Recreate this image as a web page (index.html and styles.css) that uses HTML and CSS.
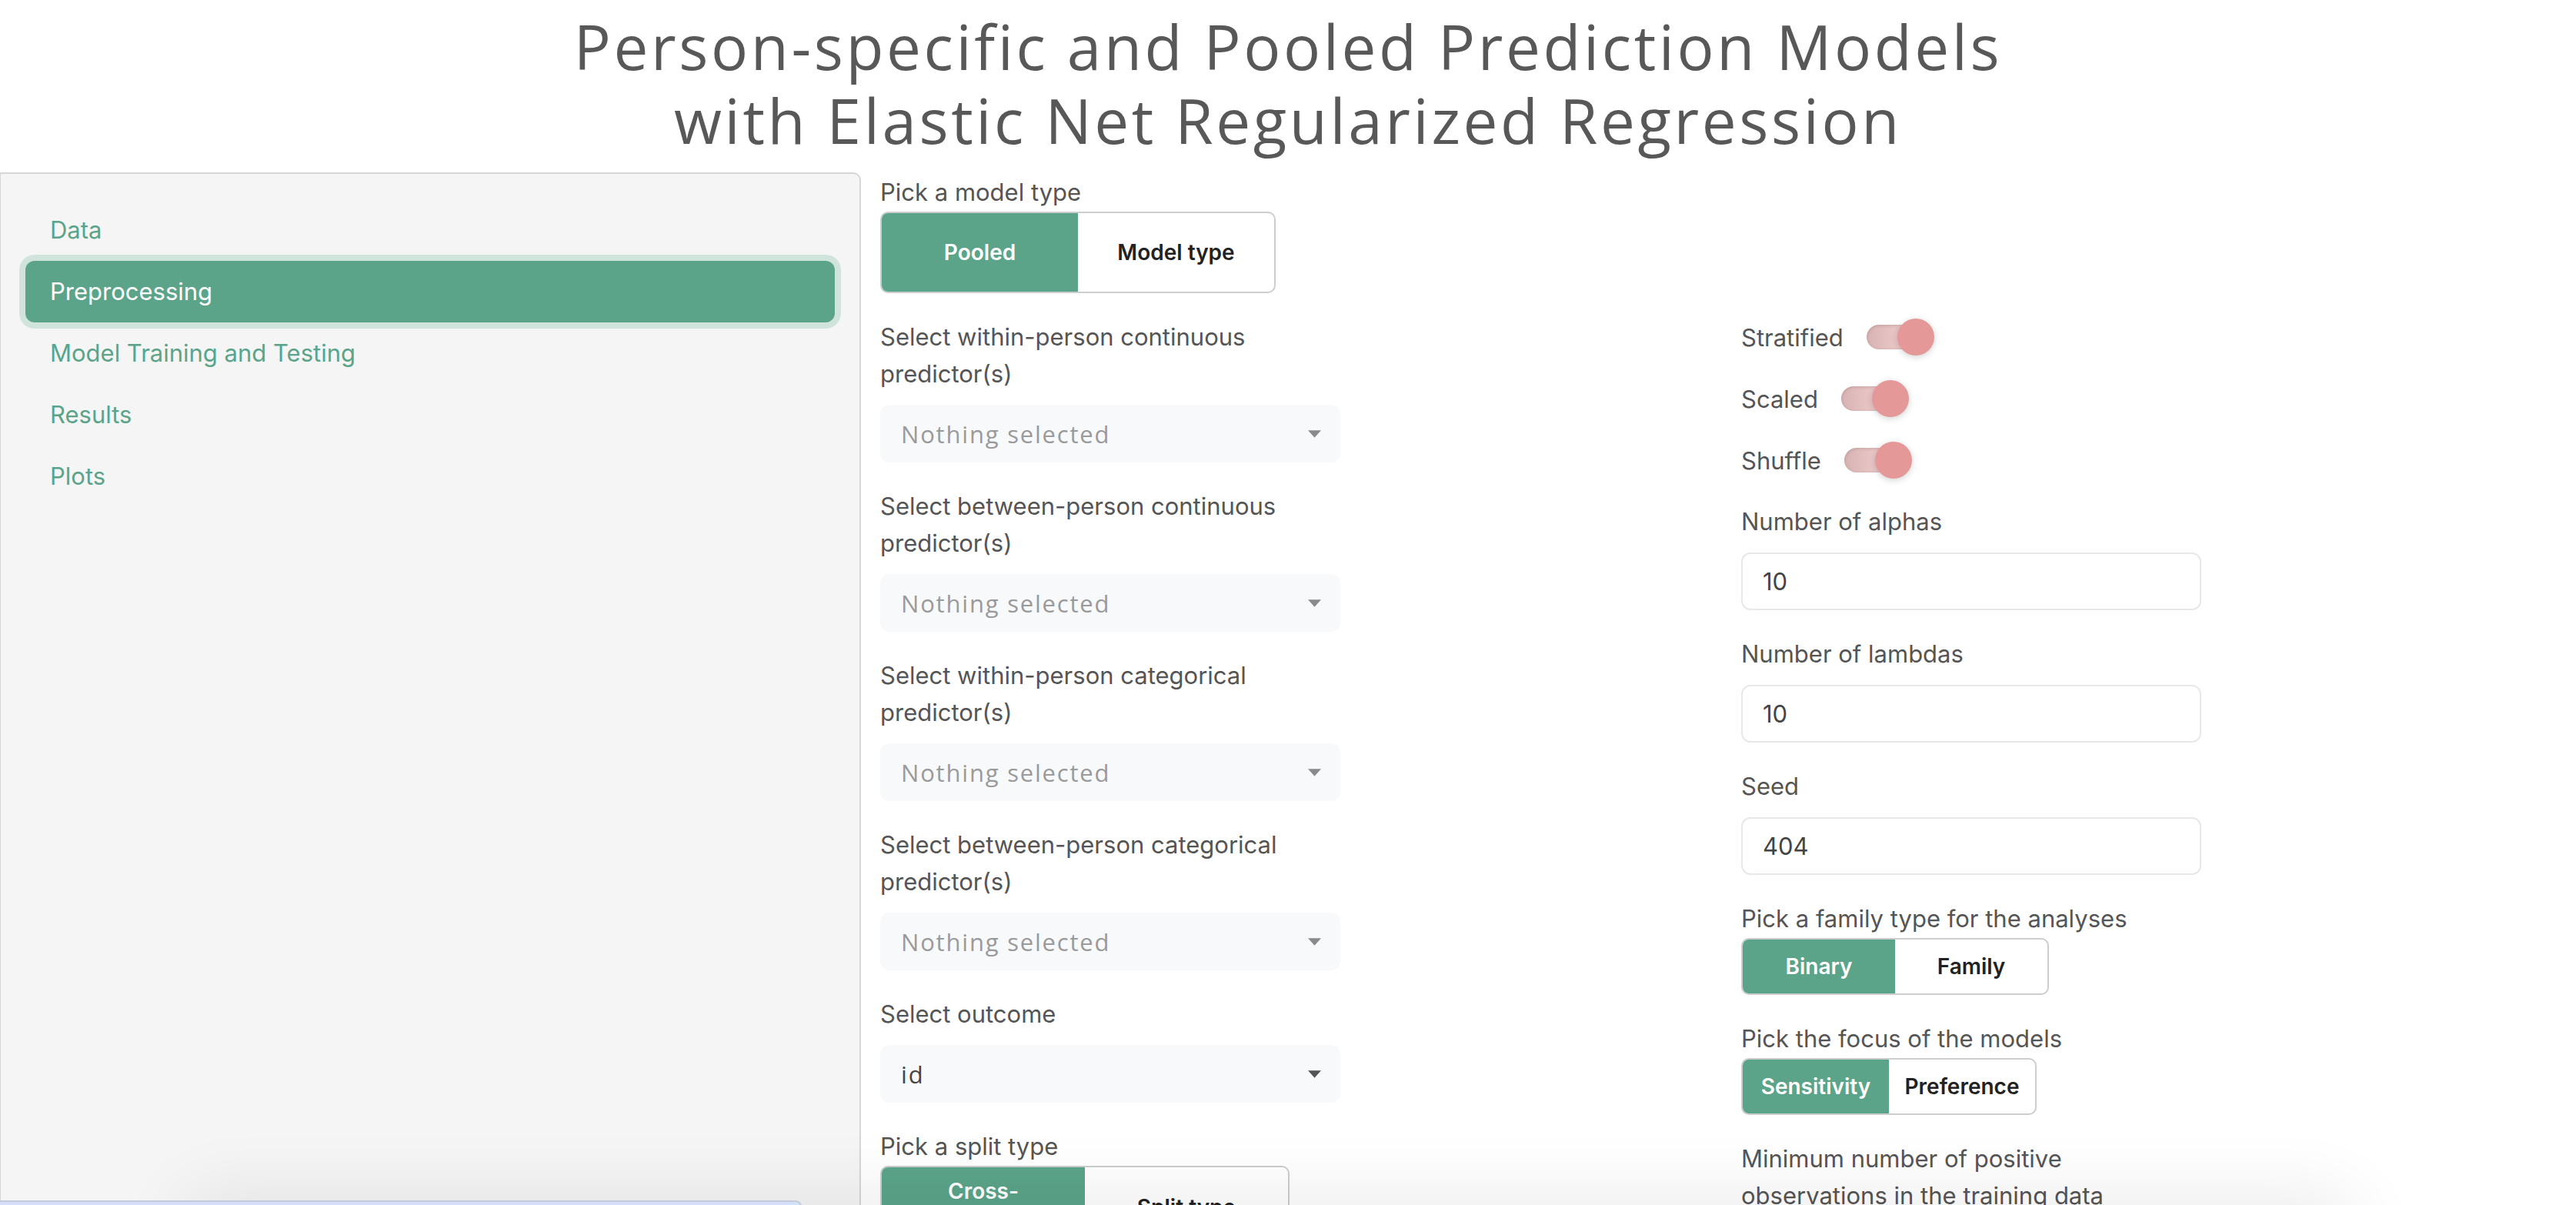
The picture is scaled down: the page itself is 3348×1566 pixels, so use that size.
FILE: index.html
```html
<!DOCTYPE html>
<html lang="en">
<head>
<meta charset="utf-8">
<title>Person-specific and Pooled Prediction Models</title>
<link rel="stylesheet" href="styles.css">
</head>
<body>
<h1 class="title"><span class="title-line">Person-specific and Pooled Prediction Models</span><span class="title-line">with Elastic Net Regularized Regression</span></h1>
<div class="layout">
  <aside class="well">
    <ul class="nav-pills">
      <li><a class="nav-link">Data</a></li>
      <li><a class="nav-link active">Preprocessing</a></li>
      <li><a class="nav-link">Model Training and Testing</a></li>
      <li><a class="nav-link">Results</a></li>
      <li><a class="nav-link">Plots</a></li>
    </ul>
  </aside>
  <main class="main">
    <div class="col col-left">
      <div class="field">
        <label class="lbl lbl-tight">Pick a model type</label>
        <div class="btn-group grp-model">
          <span class="btn on">Pooled</span>
          <span class="btn">Model type</span>
        </div>
      </div>
      <div class="field">
        <label class="lbl">Select within-person continuous predictor(s)</label>
        <div class="select placeholder"><span>Nothing selected</span><svg class="caret" viewBox="0 0 18 10"><path d="M0 0h18L9 10z"/></svg></div>
      </div>
      <div class="field">
        <label class="lbl">Select between-person continuous predictor(s)</label>
        <div class="select placeholder"><span>Nothing selected</span><svg class="caret" viewBox="0 0 18 10"><path d="M0 0h18L9 10z"/></svg></div>
      </div>
      <div class="field">
        <label class="lbl">Select within-person categorical predictor(s)</label>
        <div class="select placeholder"><span>Nothing selected</span><svg class="caret" viewBox="0 0 18 10"><path d="M0 0h18L9 10z"/></svg></div>
      </div>
      <div class="field">
        <label class="lbl">Select between-person categorical predictor(s)</label>
        <div class="select placeholder"><span>Nothing selected</span><svg class="caret" viewBox="0 0 18 10"><path d="M0 0h18L9 10z"/></svg></div>
      </div>
      <div class="field">
        <label class="lbl">Select outcome</label>
        <div class="select"><span>id</span><svg class="caret" viewBox="0 0 18 10"><path d="M0 0h18L9 10z"/></svg></div>
      </div>
      <div class="field">
        <label class="lbl lbl-tight">Pick a split type</label>
        <div class="btn-group grp-split">
          <span class="btn on">Cross-validation</span>
          <span class="btn">Split type</span>
        </div>
      </div>
    </div>
    <div class="col col-right">
      <div class="toggle-row"><span class="lbl-inline">Stratified</span><span class="switch"><span class="knob"></span></span></div>
      <div class="toggle-row"><span class="lbl-inline">Scaled</span><span class="switch"><span class="knob"></span></span></div>
      <div class="toggle-row"><span class="lbl-inline">Shuffle</span><span class="switch"><span class="knob"></span></span></div>
      <div class="field">
        <label class="lbl">Number of alphas</label>
        <div class="input">10</div>
      </div>
      <div class="field">
        <label class="lbl">Number of lambdas</label>
        <div class="input">10</div>
      </div>
      <div class="field">
        <label class="lbl">Seed</label>
        <div class="input">404</div>
      </div>
      <div class="field">
        <label class="lbl lbl-tight">Pick a family type for the analyses</label>
        <div class="btn-group grp-family">
          <span class="btn on">Binary</span>
          <span class="btn">Family</span>
        </div>
      </div>
      <div class="field">
        <label class="lbl lbl-tight">Pick the focus of the models</label>
        <div class="btn-group grp-focus">
          <span class="btn on">Sensitivity</span>
          <span class="btn">Preference</span>
        </div>
      </div>
      <div class="field">
        <label class="lbl">Minimum number of positive observations in the training data</label>
        <div class="input">1</div>
      </div>
    </div>
  </main>
</div>
<div class="bottom-shadow"></div>
<div class="bottom-bar"></div>
</body>
</html>
```

FILE: styles.css
```css
* { box-sizing: border-box; }
html, body { margin: 0; padding: 0; background: #fff; }
body {
  font-family: Inter, "Noto Sans", sans-serif;
  color: #555;
  overflow: hidden;
  height: 1566px;
}
.title {
  margin: 0;
  padding-top: 12px;
  display: flex;
  flex-direction: column;
  align-items: center;
  font-family: "Open Sans", "Noto Sans", sans-serif;
  font-weight: 500;
  font-size: 80px;
  letter-spacing: 3.6px;
  color: #585858;
  height: 224px;
}
.title-line {
  display: block;
  line-height: 96px;
  height: 96px;
  overflow: visible;
}
.layout {
  display: grid;
  grid-template-columns: 1119px 1fr;
  column-gap: 25px;
  align-items: start;
}
.well {
  background: #f5f5f5;
  border: 2px solid #d6d6d6;
  border-left-width: 1px;
  border-radius: 0 10px 10px 0;
  padding: 33px 32px;
  height: 1500px;
}
.nav-pills { list-style: none; margin: 0; padding: 0; }
.nav-link {
  display: block;
  padding: 16px 32px;
  font-size: 31px;
  line-height: 48px;
  color: #5ba48a;
  border-radius: 12px;
}
.nav-link.active {
  background: #5ba48a;
  color: #fff;
  box-shadow: 0 0 0 8px #d0e4dc;
}
.main {
  display: grid;
  grid-template-columns: 1119px 1fr;
}
.col-left { padding-top: 2px; }
.col-right { padding-top: 190px; }
.field { margin-bottom: 33px; }
.lbl {
  display: block;
  width: 600px;
  font-size: 31px;
  line-height: 48px;
  color: #555;
  margin-bottom: 16px;
}
.lbl-tight { margin-bottom: 1px; }
.select {
  width: 598px;
  height: 75px;
  background: #f8f9fa;
  border-radius: 12px;
  padding: 0 25px 0 27px;
  display: flex;
  align-items: center;
  justify-content: space-between;
  font-family: "Open Sans", "Noto Sans", sans-serif;
  font-size: 31px;
  letter-spacing: 1.8px;
  color: #444;
}
.select.placeholder { color: #9a9a9a; }
.caret { width: 17px; height: 10px; fill: #555; }
.select.placeholder .caret { fill: #8a8a8a; }
.input {
  width: 598px;
  height: 75px;
  border: 2px solid #e8e8e8;
  border-radius: 12px;
  padding: 0 26px;
  display: flex;
  align-items: center;
  font-size: 31px;
  color: #444;
  background: #fff;
}
.btn-group {
  display: grid;
  grid-template-columns: 1fr 1fr;
  border: 2px solid #cdcdcd;
  border-radius: 10px;
  overflow: hidden;
  background: #fff;
}
.btn {
  display: flex;
  align-items: center;
  justify-content: center;
  text-align: center;
  font-size: 28px;
  font-weight: 600;
  line-height: 42px;
  padding: 14px 20px;
  color: #222;
}
.btn.on { background: #5ba48a; color: #fff; }
.grp-model { width: 514px; height: 106px; }
.grp-split { width: 532px; }
.grp-split .btn { padding: 10px 40px; }
.grp-family { width: 400px; }
.grp-focus { width: 384px; }
.toggle-row {
  display: flex;
  align-items: center;
  gap: 30px;
  height: 48px;
  margin-bottom: 32px;
  font-size: 31px;
}
.switch {
  position: relative;
  width: 72px;
  height: 32px;
  border-radius: 16px;
  background: linear-gradient(90deg, #d9b3b3, #ecc8c8 60%, #e6c2c2);
  box-shadow: inset 0 1px 4px rgba(0,0,0,0.15);
}
.knob {
  position: absolute;
  right: -16px;
  top: -8px;
  width: 48px;
  height: 48px;
  border-radius: 50%;
  background: #e59898;
  box-shadow: 0 2px 8px rgba(0,0,0,0.18);
}
.bottom-shadow {
  position: fixed;
  left: 250px;
  right: 300px;
  bottom: -70px;
  height: 70px;
  border-radius: 40px;
  box-shadow: 0 0 90px 20px rgba(0,0,0,0.07);
}
.bottom-bar {
  position: fixed;
  left: 0;
  bottom: -10px;
  width: 1042px;
  height: 16px;
  background: #d4e0f7;
  border: 2px solid #c3cbdc;
  border-left: none;
  border-radius: 0 8px 0 0;
}
```
